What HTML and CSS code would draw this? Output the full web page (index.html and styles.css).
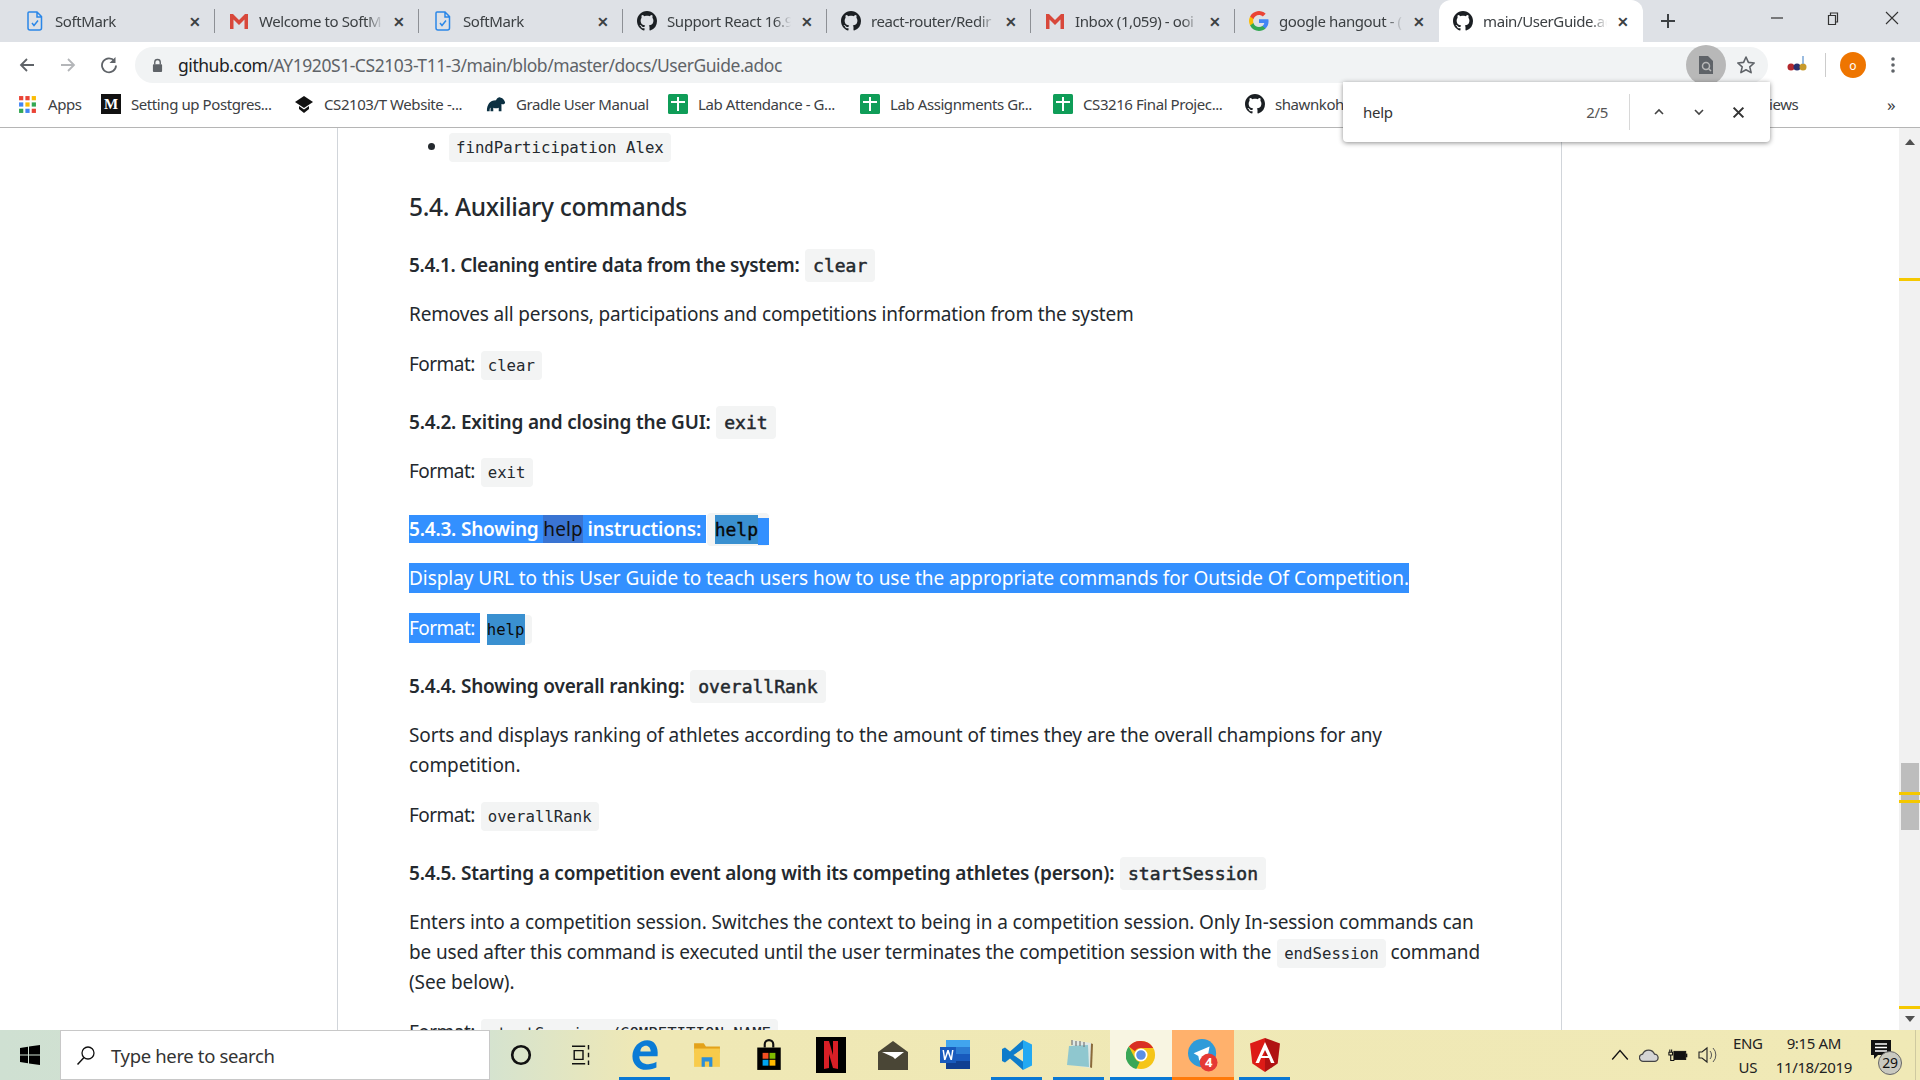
FILE: index.html
```html
<!DOCTYPE html>
<html lang="en">
<head>
<meta charset="utf-8">
<title>main/UserGuide.adoc</title>
<link rel="stylesheet" href="styles.css">
</head>
<body>
<svg class="defs" width="0" height="0">
  <defs>
    <symbol id="gh" viewBox="0 0 16 16"><path fill="#1b1f23" d="M8 0C3.58 0 0 3.58 0 8c0 3.54 2.29 6.53 5.47 7.59.4.07.55-.17.55-.38 0-.19-.01-.82-.01-1.49-2.01.37-2.53-.49-2.69-.94-.09-.23-.48-.94-.82-1.13-.28-.15-.68-.52-.01-.53.63-.01 1.08.58 1.23.82.72 1.21 1.87.87 2.33.66.07-.52.28-.87.51-1.07-1.78-.2-3.64-.89-3.64-3.95 0-.87.31-1.59.82-2.15-.08-.2-.36-1.02.08-2.12 0 0 .67-.21 2.2.82.64-.18 1.32-.27 2-.27.68 0 1.36.09 2 .27 1.53-1.04 2.2-.82 2.2-.82.44 1.1.16 1.92.08 2.12.51.56.82 1.27.82 2.15 0 3.07-1.87 3.75-3.65 3.95.29.25.54.73.54 1.48 0 1.07-.01 1.93-.01 2.2 0 .21.15.46.55.38A8.013 8.013 0 0016 8c0-4.42-3.58-8-8-8z"/></symbol>
    <symbol id="doc" viewBox="0 0 16 20"><path fill="none" stroke="#2b87e8" stroke-width="1.5" d="M2 1h8l4.500 4.500V17a2 2 0 0 1-2 2H3a2 2 0 0 1-2-2V2a1 1 0 0 1 1-1zM10 1v5h4.500"/><path fill="none" stroke="#2b87e8" stroke-width="1.500" d="M5 12l2 2.500 4-5"/></symbol>
    <symbol id="gm" viewBox="0 0 20 16"><path fill="#d8483b" d="M1 1h3l6 6 6-6h3v15h-3.500V6.500L10 12 4.500 6.500V16H1z"/></symbol>
    <symbol id="sheet" viewBox="0 0 20 20"><rect width="20" height="20" rx="1.500" fill="#0f9d58"/><path fill="#fff" d="M9 3h2v4h6v2h-6v8H9V9H3V7h6z"/></symbol>
    <symbol id="g" viewBox="0 0 18 18"><path fill="#4285f4" d="M17.600 9.200c0-.6-.1-1.300-.2-1.800H9v3.500h4.800a4.100 4.100 0 0 1-1.800 2.700v2.200h2.900c1.700-1.600 2.700-3.900 2.700-6.600z"/><path fill="#34a853" d="M9 18c2.400 0 4.500-.8 5.900-2.200L12 13.600c-.8.500-1.800.9-3 .9-2.300 0-4.300-1.600-5-3.700H1v2.300A9 9 0 0 0 9 18z"/><path fill="#fbbc05" d="M4 10.700a5.300 5.300 0 0 1 0-3.400V5H1a9 9 0 0 0 0 8z"/><path fill="#ea4335" d="M9 3.600c1.300 0 2.500.5 3.400 1.300L15 2.400A9 9 0 0 0 1 5l3 2.300c.7-2.100 2.700-3.700 5-3.700z"/></symbol>
  </defs>
</svg>

<div class="tabstrip">
  <div class="tab"><svg class="fav" viewBox="0 0 20 20"><use href="#doc"/></svg><span class="tab-title">SoftMark</span><span class="tab-x">✕</span></div>
  <div class="tab"><svg class="fav" viewBox="0 0 20 20"><use href="#gm"/></svg><span class="tab-title">Welcome to SoftM</span><span class="tab-x">✕</span></div>
  <div class="tab"><svg class="fav" viewBox="0 0 20 20"><use href="#doc"/></svg><span class="tab-title">SoftMark</span><span class="tab-x">✕</span></div>
  <div class="tab"><svg class="fav" viewBox="0 0 20 20"><use href="#gh"/></svg><span class="tab-title">Support React 16.9</span><span class="tab-x">✕</span></div>
  <div class="tab"><svg class="fav" viewBox="0 0 20 20"><use href="#gh"/></svg><span class="tab-title">react-router/Redir</span><span class="tab-x">✕</span></div>
  <div class="tab"><svg class="fav" viewBox="0 0 20 20"><use href="#gm"/></svg><span class="tab-title">Inbox (1,059) - ooi</span><span class="tab-x">✕</span></div>
  <div class="tab"><svg class="fav" viewBox="0 0 20 20"><use href="#g"/></svg><span class="tab-title">google hangout - (</span><span class="tab-x">✕</span></div>
  <div class="tab active"><svg class="fav" viewBox="0 0 20 20"><use href="#gh"/></svg><span class="tab-title">main/UserGuide.ad</span><span class="tab-x">✕</span></div>
  <svg class="newtab" viewBox="0 0 16 16"><path d="M8 1v14M1 8h14" stroke="#3c4043" stroke-width="2"/></svg>
  <div class="winctl">
    <svg class="wc" viewBox="0 0 14 14"><path d="M1 7h12" stroke="#333" stroke-width="1.200"/></svg>
    <svg class="wc wc-max" viewBox="0 0 14 14"><path d="M2.500 4h7v9h-7zM4.500 4V1.500h7v9H9.500" fill="none" stroke="#333" stroke-width="1.200"/></svg>
    <svg class="wc" viewBox="0 0 14 14"><path d="M1 1l12 12M13 1L1 13" stroke="#333" stroke-width="1.100"/></svg>
  </div>
</div>

<div class="toolbar">
  <svg class="nav" viewBox="0 0 18 18"><path d="M16 9H3M9 3L3 9l6 6" fill="none" stroke="#5f6368" stroke-width="1.800"/></svg>
  <svg class="nav" viewBox="0 0 18 18"><path d="M2 9h13M9 3l6 6-6 6" fill="none" stroke="#b4b6b9" stroke-width="1.800"/></svg>
  <svg class="nav" viewBox="0 0 18 18"><path d="M14.500 5A7 7 0 1 0 16 9.500" fill="none" stroke="#5f6368" stroke-width="1.800"/><path d="M15.500 1v6h-6z" fill="#5f6368"/></svg>
  <div class="omnibox">
    <svg class="lock" viewBox="0 0 12 16"><path d="M3 7V4.500a3 3 0 0 1 6 0V7" fill="none" stroke="#5f6368" stroke-width="1.500"/><rect x="1" y="6.500" width="10" height="8.500" rx="1" fill="#5f6368"/></svg>
    <span class="url"><span class="host">github.com</span>/AY1920S1-CS2103-T11-3/main/blob/master/docs/UserGuide.adoc</span>
    <span class="find-chip"><svg viewBox="0 0 16 18" width="16" height="18"><path d="M1 0h9l5 5v13H1z" fill="#5f6368"/><circle cx="8" cy="10" r="3.500" fill="none" stroke="#b8b8b8" stroke-width="1.500"/><path d="M10.500 12.500l2.500 2.500" stroke="#b8b8b8" stroke-width="1.500"/></svg></span>
    <svg class="star" viewBox="0 0 20 20"><path d="M10 2l2.400 5.400 5.800.6-4.400 3.900 1.300 5.700L10 14.700l-5.100 2.900 1.300-5.700L1.800 8l5.800-.6z" fill="none" stroke="#5f6368" stroke-width="1.600" stroke-linejoin="round"/></svg>
  </div>
  <div class="tb-right">
    <svg class="ext" viewBox="0 0 22 20"><circle cx="5" cy="12" r="3.500" fill="#b3282d"/><circle cx="11" cy="12" r="3.500" fill="#28306e"/><circle cx="17" cy="12" r="3.500" fill="#c79a2c"/><path d="M17 1v8" stroke="#7aa6d6" stroke-width="1.500"/></svg>
    <span class="tb-sep"></span>
    <span class="avatar">o</span>
    <svg class="dots" viewBox="0 0 4 18"><circle cx="2" cy="3" r="1.800" fill="#5f6368"/><circle cx="2" cy="9" r="1.800" fill="#5f6368"/><circle cx="2" cy="15" r="1.800" fill="#5f6368"/></svg>
  </div>
</div>

<div class="bookmarks">
  <div class="bm bm-apps"><svg class="bm-ic apps" viewBox="0 0 18 18"><g><rect x="1" y="1" width="4" height="4" fill="#ea4335"/><rect x="7" y="1" width="4" height="4" fill="#ea4335"/><rect x="13" y="1" width="4" height="4" fill="#fbbc05"/><rect x="1" y="7" width="4" height="4" fill="#4285f4"/><rect x="7" y="7" width="4" height="4" fill="#fbbc05"/><rect x="13" y="7" width="4" height="4" fill="#34a853"/><rect x="1" y="13" width="4" height="4" fill="#34a853"/><rect x="7" y="13" width="4" height="4" fill="#4285f4"/><rect x="13" y="13" width="4" height="4" fill="#ea4335"/></g></svg>Apps</div>
  <div class="bm"><span class="bm-m">M</span>Setting up Postgres...</div>
  <div class="bm"><svg class="bm-ic" viewBox="0 0 20 20"><path fill="#111" d="M10 2l9 6-9 6-9-6z"/><path fill="#111" d="M5 12l5 3.500 5-3.500v3l-5 4-5-4z"/></svg>CS2103/T Website -...</div>
  <div class="bm"><svg class="bm-ic" viewBox="0 0 22 20"><path fill="#0b3042" d="M1 18c0-7 3-12 10-12 1-3 4-4 5-3 2 0 4 2 5 5 0 2-2 3-4 2v8h-3v-4c-2 1-4 1-6 0v4H5v-4c-1 0-1 2-1 4z"/></svg>Gradle User Manual</div>
  <div class="bm"><svg class="bm-ic" viewBox="0 0 20 20"><use href="#sheet"/></svg>Lab Attendance - G...</div>
  <div class="bm"><svg class="bm-ic" viewBox="0 0 20 20"><use href="#sheet"/></svg>Lab Assignments Gr...</div>
  <div class="bm"><svg class="bm-ic" viewBox="0 0 20 20"><use href="#sheet"/></svg>CS3216 Final Projec...</div>
  <div class="bm"><svg class="bm-ic" viewBox="0 0 20 20"><use href="#gh"/></svg>shawnkoh,</div>
  <div class="bm bm-tail">iews</div>
  <div class="bm-more">»</div>
</div>

<div class="viewport">
  <div class="gutter"></div>
  <article class="doc">
    <ul class="list"><li><code class="chip">findParticipation Alex</code></li></ul>
    <h2>5.4. Auxiliary commands</h2>

    <h3 class="h-tight">5.4.1. Cleaning entire data from the system: <code class="chip">clear</code></h3>
    <p class="p-tight">Removes all persons, participations and competitions information from the system</p>
    <p><span class="fmt">Format:</span> <code class="chip">clear</code></p>

    <h3>5.4.2. Exiting and closing the GUI: <code class="chip">exit</code></h3>
    <p><span class="fmt">Format:</span> <code class="chip">exit</code></p>

    <h3 class="hl"><span class="sel">5.4.3. Showing <mark class="hit">help</mark> instructions:&nbsp;</span><code class="chip"><span class="sel-code">help</span><span class="sel sel-tail"></span></code></h3>
    <p class="hl p-wide"><span class="sel">Display URL to this User Guide to teach users how to use the appropriate commands for Outside Of Competition.</span></p>
    <p class="hl"><span class="sel"><span class="fmt">Format:</span>&nbsp;</span><code class="chip chip-sel"><span class="sel-code">help</span></code></p>

    <h3>5.4.4. Showing overall ranking: <code class="chip">overallRank</code></h3>
    <p>Sorts and displays ranking of athletes according to the amount of times they are the overall champions for any<br>competition.</p>
    <p><span class="fmt">Format:</span> <code class="chip">overallRank</code></p>

    <h3>5.4.5. Starting a competition event along with its competing athletes (person): <code class="chip">startSession</code></h3>
    <p>Enters into a competition session. Switches the context to being in a competition session. Only In-session commands can<br><span class="line-tight">be used after this command is executed until the user terminates the competition session with the</span> <code class="chip">endSession</code> command<br>(See below).</p>
    <p><span class="fmt">Format:</span> <code class="chip">startSession /COMPETITION_NAME</code></p>
  </article>
  <div class="scrollbar">
    <span class="sb-arrow up"></span>
    <span class="tick tick-a"></span>
    <span class="thumb"></span>
    <span class="tick tick-b"></span>
    <span class="tick tick-c"></span>
    <span class="tick tick-d"></span>
    <span class="sb-arrow down"></span>
  </div>
</div>

<div class="findbar">
  <span class="find-q">help</span>
  <span class="find-n">2/5</span>
  <span class="find-sep"></span>
  <svg class="find-b" viewBox="0 0 12 12"><path d="M2 8l4-4 4 4" fill="none" stroke="#444" stroke-width="1.600"/></svg>
  <svg class="find-b" viewBox="0 0 12 12"><path d="M2 4l4 4 4-4" fill="none" stroke="#444" stroke-width="1.600"/></svg>
  <svg class="find-b" viewBox="0 0 12 12"><path d="M1.500 1.500l9 9M10.500 1.500l-9 9" fill="none" stroke="#333" stroke-width="1.900"/></svg>
</div>

<footer class="taskbar">
  <svg class="start" viewBox="0 0 20 20"><path fill="#000" d="M0 3l8-1.200V9.500H0zM9 1.600L20 0v9.500H9zM0 10.500h8v7.700L0 17zM9 10.500h11V20L9 18.400z"/></svg>
  <div class="search">
    <svg class="search-ic" viewBox="0 0 20 20"><circle cx="12" cy="8" r="6" fill="none" stroke="#111" stroke-width="1.300"/><path d="M8 12.500L1.500 19.500" stroke="#111" stroke-width="1.500"/></svg>
    <span>Type here to search</span>
  </div>
  <div class="apps-row">
    <div class="tk"><svg viewBox="0 0 20 20" class="tk-s"><circle cx="10" cy="10" r="8" fill="none" stroke="#111" stroke-width="2.400"/></svg></div>
    <div class="tk"><svg viewBox="0 0 20 20" class="tk-s"><path d="M0 2h12M0 18h12M2 6h8v8H2zM15 1v4M15 8v4M15 15v4" fill="none" stroke="#111" stroke-width="1.300"/></svg></div>
    <div class="tk run"><svg viewBox="0 0 24 28" class="tk-i"><path fill="#0a7bd6" d="M23 15H7c0 5 4 7 8 7 3 0 6-1 7-2v5c-2 1-5 2-9 2C6 27 1 22 1 15 1 7 7 1 14 1c6 0 10 5 9 14zM8 11h9c0-3-2-5-4-5-3 0-5 2-5 5z"/></svg></div>
    <div class="tk"><svg viewBox="0 0 26 26" class="tk-i"><path fill="#e3a21a" d="M1 2h9l2 3h13v6H1z"/><path fill="#f8cb4b" d="M1 7h24v17H1z"/><path fill="#2b8fd9" d="M8 24v-9h10v9h-3v-5h-4v5z"/></svg></div>
    <div class="tk"><svg viewBox="0 0 24 30" class="tk-i"><path fill="none" stroke="#111" stroke-width="2" d="M8 8V5a4 4 0 0 1 8 0v3"/><rect x="1" y="8" width="22" height="21" fill="#000"/><rect x="6" y="13" width="5.500" height="5.500" fill="#f25022"/><rect x="12.500" y="13" width="5.500" height="5.500" fill="#7fba00"/><rect x="6" y="19.500" width="5.500" height="5.500" fill="#00a4ef"/><rect x="12.500" y="19.500" width="5.500" height="5.500" fill="#ffb900"/></svg></div>
    <div class="tk"><svg viewBox="0 0 30 36" class="tk-l"><rect width="30" height="36" fill="#000"/><path fill="#d81f26" d="M8 4h5l4 14V4h5v28l-5-1-4-14v14l-5 1z"/></svg></div>
    <div class="tk"><svg viewBox="0 0 30 30" class="tk-l"><path fill="#4a4636" d="M0 12L15 1l15 11v18H0z"/><path fill="#fff" d="M4 12h22l-9 7-2-2z"/></svg></div>
    <div class="tk"><svg viewBox="0 0 30 30" class="tk-l"><rect x="6" width="24" height="7" fill="#41a5ee"/><rect x="6" y="7" width="24" height="7" fill="#2b7cd3"/><rect x="6" y="14" width="24" height="7" fill="#185abd"/><rect x="6" y="21" width="24" height="8" fill="#103f91"/><rect y="7" width="16" height="16" fill="#185abd"/><path d="M2.500 10l1.500 10h1.500l2.500-7 2.500 7H12l1.500-10H12l-1 7-2.300-7H7.300L5 17l-1-7z" fill="#fff"/></svg></div>
    <div class="tk run"><svg viewBox="0 0 30 30" class="tk-l"><path fill="#23a9f2" d="M21 0l9 4.500v21L21 30z"/><path fill="#0e7ccb" d="M21 0v8.500L11.500 15 21 21.500V30L8 18.500 3 22.500 0 21V9l3-1.500 5 4z"/></svg></div>
    <div class="tk run"><svg viewBox="0 0 30 32" class="tk-l"><path fill="#8a6a3a" d="M26 4l3 1 -1 24-3-1z"/><path fill="#dfe8e4" d="M8 1l19 3-1 25-18-3z"/><path fill="#8fc7cf" d="M5 7l19-1 1 22-22-2z"/><path d="M8 1v5M12 2v5M16 2v5M20 3v5" stroke="#777" stroke-width="1.200"/></svg></div>
    <div class="tk run lit"><svg viewBox="0 0 32 32" class="tk-l"><circle cx="16" cy="16" r="15" fill="#f5c518"/><path fill="#d93025" d="M16 1a15 15 0 0 1 13 7.500H16A7.500 7.500 0 0 0 9.500 12L3 7A15 15 0 0 1 16 1z"/><path fill="#3aa757" d="M3 7l6.500 12.500a7.500 7.500 0 0 0 5 4L11 31A15 15 0 0 1 3 7z"/><circle cx="16" cy="16" r="6" fill="#5a8fe6" stroke="#fff" stroke-width="1.800"/></svg></div>
    <div class="tk run hot"><svg viewBox="0 0 32 36" class="tk-l"><circle cx="15" cy="16" r="15" fill="#2f9bd9"/><path fill="#fff" d="M6 16l17-7-3 16-5-4-3 3-1-5z"/><circle cx="22" cy="26" r="9.500" fill="#e53935"/><text x="22" y="31" class="tk-badge">4</text></svg></div>
    <div class="tk run"><svg viewBox="0 0 30 34" class="tk-l"><path fill="#dd1b16" d="M15 0L0 5.500l2.300 20L15 34z"/><path fill="#b01212" d="M15 0l15 5.500-2.300 20L15 34z"/><path fill="#fff" d="M15 4L5.500 25H9l2-5h8l2 5h3.500zM15 12l3 6h-6z"/></svg></div>
  </div>
  <div class="tray">
    <svg class="tr" viewBox="0 0 18 18"><path d="M2 13l7-8 7 8" fill="none" stroke="#111" stroke-width="1.200"/></svg>
    <svg class="tr" viewBox="0 0 22 18"><path d="M5 16a4 4 0 0 1-1-8 7 7 0 0 1 13 0 4 4 0 0 1 0 8z" fill="#d5d5d5" stroke="#444" stroke-width="1.400"/></svg>
    <svg class="tr" viewBox="0 0 22 18"><rect x="6.500" y="5" width="13" height="9" fill="#111" stroke="#111"/><path d="M20.500 7.500v4" stroke="#111" stroke-width="1.500"/><path d="M1 6h4v3H1zM2 3v3M4 3v3M3 9v6h4" fill="none" stroke="#111" stroke-width="1.200"/></svg>
    <svg class="tr" viewBox="0 0 20 20"><path d="M2 7h3l5-4v14l-5-4H2z" fill="none" stroke="#222" stroke-width="1.100"/><path d="M13 6a6 6 0 0 1 0 8M16 3a10 10 0 0 1 0 14" fill="none" stroke="#555" stroke-width="1"/></svg>
    <div class="lang"><span>ENG</span><span>US</span></div>
    <div class="clock"><span>9:15 AM</span><span>11/18/2019</span></div>
    <div class="notif">
      <svg class="notif-ic" viewBox="0 0 20 20"><path fill="#111" d="M0 0h20v15H7l-4 4v-4H0z"/><path d="M4 4h12M4 7.500h12M4 11h12" stroke="#fff" stroke-width="1.300"/></svg>
      <span class="notif-n">29</span>
    </div>
  </div>
</footer>
</body>
</html>
```
FILE: styles.css
```css
* { box-sizing: border-box; }
html, body { margin: 0; height: 100%; overflow: hidden; }
body {
  display: flex;
  flex-direction: column;
  height: 1080px;
  font-family: "Noto Sans", "Open Sans", sans-serif;
  color: #24292e;
  background: #fff;
  position: relative;
}
.defs { position: absolute; }

/* tab strip */
.tabstrip {
  height: 42px;
  flex: none;
  background: #dee1e6;
  display: flex;
  align-items: center;
  padding-left: 11px;
}
.tab {
  width: 204px;
  height: 42px;
  flex: none;
  display: flex;
  align-items: center;
  padding-left: 14px;
  position: relative;
  font-size: 15px;
  letter-spacing: -0.4px;
  color: #3c4043;
}
.tab::after {
  content: "";
  position: absolute;
  right: 0;
  top: 9px;
  height: 24px;
  width: 1px;
  background: #8d9095;
}
.tab:nth-child(7)::after, .tab.active::after { display: none; }
.tab.active {
  background: #fff;
  border-radius: 12px 12px 0 0;
  color: #3c4043;
}
.fav { width: 20px; height: 20px; flex: none; margin-right: 10px; }
.tab-title {
  flex: none;
  width: 128px;
  overflow: hidden;
  white-space: nowrap;
  -webkit-mask-image: linear-gradient(90deg, #000 84%, transparent 97%);
  mask-image: linear-gradient(90deg, #000 84%, transparent 97%);
}
.tab-x { margin-left: 3px; font-size: 14px; font-weight: 700; color: #3c4043; letter-spacing: 0; width: 18px; text-align: center; }
.newtab { width: 16px; height: 16px; margin-left: 17px; flex: none; }
.winctl { margin-left: auto; display: flex; padding-right: 21px; align-self: flex-start; padding-top: 11px; }
.wc { width: 14px; height: 14px; margin-left: 42px; }
.wc:last-child { margin-left: 45px; }
.wc-max { height: 15px; }

/* toolbar */
.toolbar {
  height: 41px;
  flex: none;
  display: flex;
  align-items: center;
  padding: 5px 0 0 18px;
  background: #fff;
}
.nav { width: 18px; height: 18px; flex: none; margin-right: 23px; }
.nav:nth-of-type(3) { margin-right: 17px; }
.omnibox {
  width: 1633px;
  height: 36px;
  flex: none;
  border-radius: 18px;
  background: #f1f3f4;
  display: flex;
  align-items: center;
  padding-left: 17px;
  position: relative;
}
.lock { width: 11px; height: 15px; flex: none; margin-right: 15px; }
.url { font-size: 17.5px; letter-spacing: -0.45px; color: #5f6368; white-space: nowrap; }
.host { color: #202124; }
.find-chip {
  margin-left: auto;
  width: 40px;
  height: 40px;
  border-radius: 50%;
  background: #b8b8b8;
  display: flex;
  align-items: center;
  justify-content: center;
  flex: none;
}
.star { width: 20px; height: 20px; margin: 0 12px 0 10px; flex: none; }
.tb-right { display: flex; align-items: center; margin-left: 18px; flex: 1; }
.ext { width: 22px; height: 20px; flex: none; }
.tb-sep { width: 1px; height: 24px; background: #ccc; margin: 0 14px 0 17px; }
.avatar {
  width: 26px; height: 26px; border-radius: 50%;
  background: #ee7500; color: #fff; font-size: 12px;
  display: flex; align-items: center; justify-content: center; flex: none;
}
.dots { width: 4px; height: 18px; margin-left: 25px; flex: none; }

/* bookmarks */
.bookmarks {
  height: 45px;
  flex: none;
  display: grid;
  grid-template-columns: 84px 193px 192px 182px 192px 193px 192px 524px 121px 1fr;
  align-items: center;
  padding: 0 0 2px 17px;
  border-bottom: 1px solid #b5b5b5;
  font-size: 15px;
  letter-spacing: -0.42px;
  color: #3c4043;
  background: #fff;
}
.bm { display: flex; align-items: center; white-space: nowrap; gap: 10px; }
.bm-apps { gap: 11px; padding-left: 1px; }
.bm-ic { width: 20px; height: 20px; flex: none; }
.apps { width: 19px; height: 19px; }
.bm-m {
  width: 20px; height: 20px; background: #111; color: #fff; flex: none;
  font-family: "Liberation Serif", serif; font-size: 15px; font-weight: 700;
  display: flex; align-items: center; justify-content: center; letter-spacing: 0;
}
.bm-more { font-size: 17px; margin-left: -3px; }

/* page viewport */
.viewport {
  flex: 1;
  min-height: 0;
  display: flex;
  overflow: hidden;
  background: #fff;
}
.gutter { width: 337px; flex: none; }
.doc {
  width: 1225px;
  flex: none;
  border-left: 1px solid #d1d5da;
  border-right: 1px solid #d1d5da;
  padding: 3px 0 0 71px;
  font-size: 19px;
  line-height: 30px;
  letter-spacing: -0.1px;
  color: #24292e;
}
.doc p { margin: 0 0 20px; white-space: nowrap; }
.doc .p-tight { letter-spacing: -0.16px; }
.doc .p-wide { letter-spacing: -0.05px; }
.fmt { letter-spacing: -0.53px; }
.line-tight { letter-spacing: -0.15px; }
.doc h2 { font-size: 24.500px; line-height: 36px; font-weight: 500; margin: 28px 0 27px; letter-spacing: -0.35px; }
.doc h3 { font-size: 19px; line-height: 27px; height: 27px; font-weight: 600; margin: 30px 0 20px; white-space: nowrap; letter-spacing: -0.2px; }
.doc h3.h-tight { letter-spacing: -0.3px; }
.doc h2 + h3 { margin-top: 0; }
.list { margin: 0; padding: 0 0 0 39px; }
.list li { line-height: 30px; }
.chip {
  font-family: "DejaVu Sans Mono", "Liberation Mono", monospace;
  font-size: 15.700px;
  line-height: 1;
  letter-spacing: 0;
  background: #f3f4f4;
  border-radius: 4px;
  padding: 5px 7px;
  margin-left: 1px;
}
h3 .chip { font-size: 18px; padding: 6px 8px; font-weight: 400; -webkit-text-stroke: 0.5px #24292e; margin-left: 1px; }
.sel { background: #3390ff; color: #fff; padding: 1px 0; }
.hit { background: #3a74d2; color: #111; padding: 1px 0; font-weight: 400; letter-spacing: 0.1px; }
.sel-code { background: #3a90d0; color: #0a0a0a; padding: 4px 0; }
h3 .chip .sel-code { -webkit-text-stroke: 0.35px #000; }
.sel-tail { display: inline-block; width: 11px; height: 27px; vertical-align: middle; margin-right: -8px; padding: 0; }
p.hl .sel { padding: 2px 0; }
.chip-sel { padding-left: 0; padding-right: 7px; margin-left: 7px; }
.chip-sel .sel-code { padding: 6px 0; }

/* scrollbar */
.scrollbar {
  width: 21px;
  margin-left: auto;
  flex: none;
  background: #f1f1f1;
  position: relative;
}
.sb-arrow { position: absolute; left: 6px; width: 0; height: 0; border-left: 5px solid transparent; border-right: 5px solid transparent; }
.sb-arrow.up { top: 11px; border-bottom: 6px solid #505050; }
.sb-arrow.down { bottom: 8px; border-top: 6px solid #505050; }
.thumb { position: absolute; left: 2px; right: 1px; top: 635px; height: 67px; background: #bdbdbd; }
.tick { position: absolute; left: 0; right: 0; height: 3px; background: #f5c800; }
.tick-a { top: 150px; }
.tick-b { top: 664px; }
.tick-c { top: 672px; }
.tick-d { top: 878px; }

/* find bar */
.findbar {
  position: absolute;
  left: 1343px;
  top: 82px;
  width: 427px;
  height: 60px;
  background: #fff;
  border-radius: 0 0 4px 4px;
  box-shadow: 0 1px 5px rgba(0,0,0,.45);
  display: flex;
  align-items: center;
  padding-left: 20px;
  font-size: 15px;
  letter-spacing: -0.3px;
  color: #333;
}
.find-q { flex: 1; }
.find-n { color: #555; margin-right: 21px; }
.find-sep { width: 1px; height: 36px; background: #d8d8d8; margin-right: 23px; }
.find-b { width: 12px; height: 12px; margin-right: 28px; flex: none; }
.find-b:last-child { width: 13px; height: 13px; margin-right: 25px; margin-left: -1px; }

/* taskbar */
.taskbar {
  height: 50px;
  flex: none;
  display: flex;
  align-items: center;
  background: linear-gradient(90deg, #cfe0d2 0, #d5e3cf 490px, #efe8b5 640px, #f0e9b6 100%);
}
.start { width: 20px; height: 20px; margin: 0 20px; flex: none; }
.search {
  width: 430px;
  height: 50px;
  flex: none;
  background: #fff;
  border: 1px solid #c8c8c8;
  display: flex;
  align-items: center;
  padding-left: 15px;
  font-size: 18.500px;
  letter-spacing: -0.35px;
  color: #333;
}
.search-ic { width: 20px; height: 24px; margin-right: 15px; }
.apps-row { display: flex; height: 50px; padding-left: 0; }
.tk {
  height: 50px;
  width: 62px;
  flex: none;
  display: flex;
  align-items: center;
  justify-content: center;
  position: relative;
}
.tk.run::after {
  content: "";
  position: absolute;
  left: 5px;
  right: 6px;
  bottom: 0;
  height: 3px;
  background: #0a78d4;
}
.tk.lit { background: #f8f5e2; }
.tk.lit::after, .tk.hot::after { left: 0; right: 0; }
.tk.hot { background: #ffb16c; }
.tk.hot::after { background: #ff7a0a; }
.tk-s { width: 22px; height: 22px; }
.tk-i { width: 28px; height: 32px; }
.tk-l { width: 30px; height: 36px; }
.tk-badge { font-size: 14px; font-weight: 700; fill: #fff; text-anchor: middle; font-family: "Noto Sans", sans-serif; }
.tray { margin-left: auto; display: flex; align-items: center; height: 50px; }
.tray::after { content: ""; width: 1px; height: 50px; margin: 0 4px 0 12px; background: #cfc9a0; }
.tr { width: 20px; height: 20px; margin-right: 9px; flex: none; }
.lang, .clock { display: flex; flex-direction: column; align-items: center; font-size: 15px; line-height: 24px; letter-spacing: -0.35px; color: #222; }
.lang { margin: 0 13px 0 7px; }
.clock { margin-right: 19px; }
.notif { position: relative; width: 32px; height: 40px; }
.notif-ic { position: absolute; left: 0; top: 5px; width: 20px; height: 20px; }
.notif-n {
  position: absolute; left: 7px; top: 16px; width: 24px; height: 24px;
  border-radius: 50%; background: #c9c9c0; border: 1px solid #666;
  font-size: 14px; line-height: 22px; text-align: center; color: #111; letter-spacing: -0.3px;
}
```
